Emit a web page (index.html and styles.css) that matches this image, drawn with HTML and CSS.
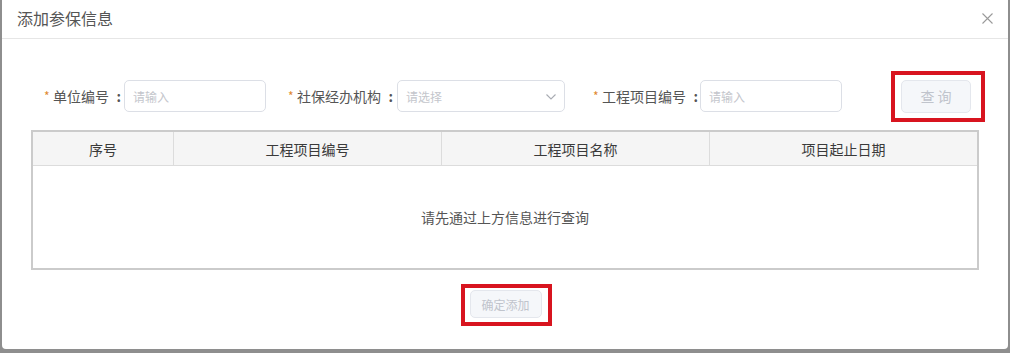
FILE: index.html
```html
<!DOCTYPE html>
<html lang="zh">
<head>
<meta charset="utf-8">
<title>添加参保信息</title>
<link rel="stylesheet" href="styles.css">
</head>
<body>
<div class="dialog">
  <div class="hd">
    <span class="title">添加参保信息</span>
    <span class="close"><svg width="11" height="11" viewBox="0 0 11 11"><path d="M0.5 0.5L10.5 10.5M10.5 0.5L0.5 10.5" stroke="#9a9a9a" stroke-width="1.1" fill="none"/></svg></span>
  </div>
  <div class="form">
    <div class="item i1">
      <label class="lab w1"><span class="star">*</span>单位编号<span class="colon">:</span></label>
      <input class="inp in1" placeholder="请输入">
    </div>
    <div class="item i2">
      <label class="lab w2"><span class="star">*</span>社保经办机构<span class="colon">:</span></label>
      <div class="inp sel"><span class="ph">请选择</span><svg class="chev" width="10" height="6" viewBox="0 0 10 6"><path d="M0.5 0.5L5 5L9.5 0.5" stroke="#a8abb2" stroke-width="1.1" fill="none"/></svg></div>
    </div>
    <div class="item i3">
      <label class="lab w3"><span class="star">*</span>工程项目编号<span class="colon">:</span></label>
      <input class="inp in1" placeholder="请输入">
    </div>
    <div class="btn-wrap q">
      <button class="btn qbtn" disabled>查 询</button>
      <span class="mark mq"></span>
    </div>
  </div>
  <div class="tbl">
    <div class="thead">
      <div class="th">序号</div>
      <div class="th">工程项目编号</div>
      <div class="th">工程项目名称</div>
      <div class="th">项目起止日期</div>
    </div>
    <div class="tbody">请先通过上方信息进行查询</div>
  </div>
  <div class="foot">
    <div class="btn-wrap">
      <button class="btn abtn" disabled>确定添加</button>
      <span class="mark ma"></span>
    </div>
  </div>
</div>
</body>
</html>
```
FILE: styles.css
```css
* { box-sizing: border-box; }
html, body { margin: 0; padding: 0; }
body {
  background: #8e8e8e;
  width: 1010px;
  height: 353px;
  overflow: hidden;
  font-family: "Noto Sans CJK SC", "Microsoft YaHei", sans-serif;
}
.dialog {
  margin-left: 2px;
  width: 1006px;
  height: 349px;
  background: #fff;
  border-radius: 0 0 4px 4px;
}
.hd {
  height: 39px;
  border-bottom: 1px solid #e6e6e6;
  display: flex;
  align-items: center;
  justify-content: space-between;
  padding: 0 16px 2px 15px;
}
.title {
  font-size: 16px;
  color: #555;
  line-height: 20px;
}
.close { display: flex; margin-right: -1px; }
.form {
  display: flex;
  align-items: center;
  margin-top: 41px;
  padding-left: 42px;
  height: 32px;
}
.item { display: flex; align-items: center; }
.i2 { margin-left: 22px; }
.i3 { margin-left: 28px; }
.lab {
  font-size: 14px;
  color: #555;
  text-align: left;
  white-space: nowrap;
  line-height: 20px;
}
.colon {
  display: inline-block;
  width: 12px;
  text-align: right;
  font-weight: bold;
  color: #555;
}
.w1 { width: 80px; }
.w2 { width: 109px; }
.w3 { width: 107px; }
.star {
  color: #e0872e;
  font-size: 12px;
  display: inline-block;
  width: 9px;
  position: relative;
  top: -1px;
}
.inp {
  height: 32px;
  border: 1px solid #dcdfe6;
  border-radius: 5px;
  background: #fff;
  font-family: inherit;
  font-size: 12px;
  padding: 0 8px;
  outline: none;
  color: #606266;
}
.inp::placeholder { color: #c4c6cc; }
.in1 { width: 142px; }
.sel {
  width: 168px;
  display: flex;
  align-items: center;
  justify-content: space-between;
  padding-right: 8px;
}
.ph { color: #c4c6cc; font-size: 12px; }
.chev { margin-top: 1px; }
.btn-wrap { position: relative; display: inline-flex; }
.q { margin-left: 59px; }
.btn {
  font-family: inherit;
  background: #f5f7fa;
  border: 1px solid #e4e7ed;
  border-radius: 5px;
  color: #c0c4cc;
  padding: 0;
  cursor: not-allowed;
}
.qbtn { width: 70px; height: 33px; font-size: 14px; }
.abtn { width: 72px; height: 28px; font-size: 12px; }
.mark {
  position: absolute;
  border: 4px solid #d8141f;
}
.mq { left: -10px; right: -14px; top: -9px; bottom: -9px; }
.ma { left: -9px; right: -10px; top: -6px; bottom: -8px; }
.tbl {
  margin: 18px 0 0 29px;
  width: 948px;
  border: 2px solid #cbcbcb;
}
.thead {
  display: grid;
  grid-template-columns: 140px 268px 268px 268px;
  height: 34px;
  background: #f5f5f5;
  border-bottom: 1px solid #dcdcdc;
}
.th {
  display: flex;
  align-items: center;
  justify-content: center;
  font-size: 14px;
  color: #3a3a3a;
  border-left: 1px solid #dcdcdc;
}
.th:first-child { border-left: none; }
.tbody {
  height: 102px;
  display: flex;
  align-items: center;
  justify-content: center;
  font-size: 14px;
  color: #555;
  padding-bottom: 1px;
}
.foot {
  display: flex;
  justify-content: center;
  margin-top: 20px;
  padding-left: 1px;
}
```
